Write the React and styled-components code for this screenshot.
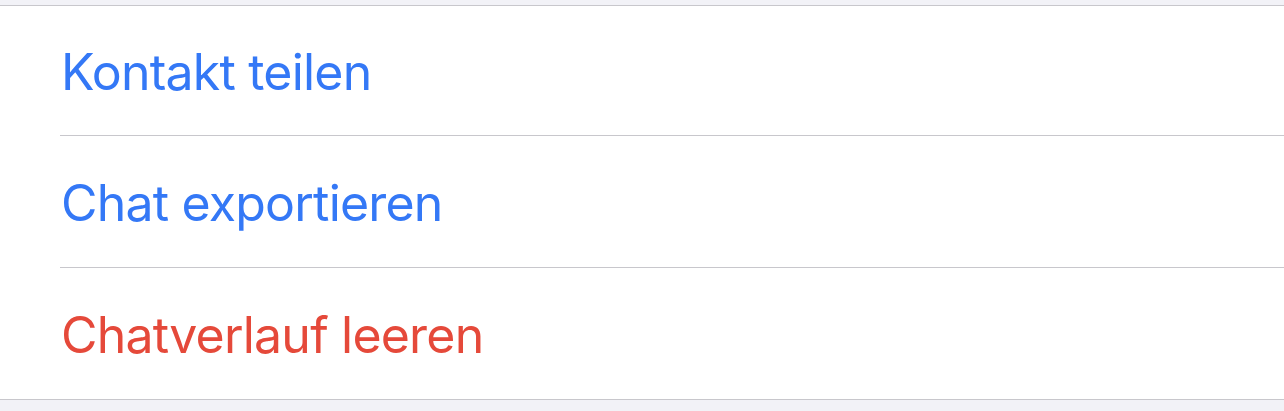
import * as React from 'react'
import styled, { createGlobalStyle } from 'styled-components'

const GlobalStyle = createGlobalStyle`
  html, body {
    margin: 0;
    padding: 0;
    background: #f2f2f7;
  }
  body {
    font-family: Inter, "Noto Sans", sans-serif;
    -webkit-font-smoothing: antialiased;
  }
`

const Page = styled.div`
  width: 1284px;
  height: 411px;
  overflow: hidden;
  padding-top: 5px;
  box-sizing: border-box;
  background: #f2f2f7;
`

const Group = styled.ul`
  list-style: none;
  margin: 0;
  padding: 0;
  background: #ffffff;
  border-top: 1px solid #c8c7cc;
  border-bottom: 1px solid #c8c7cc;
`

const Row = styled.li`
  display: flex;
  align-items: center;
  height: ${p => p.$height}px;
  padding-left: 60px;
  box-sizing: border-box;
`

const RowInner = styled.div`
  flex: 1;
  height: 100%;
  display: flex;
  align-items: center;
  border-bottom: ${p => (p.$last ? 'none' : '1px solid #c8c7cc')};
  box-sizing: border-box;
`

const Label = styled.span`
  font-size: 50px;
  font-weight: 400;
  letter-spacing: -0.8px;
  padding-left: 1px;
  padding-top: 2px;
  color: ${p => (p.$destructive ? '#e5493a' : '#3478f6')};
`

const actions = [
  { label: 'Kontakt teilen', height: 130 },
  { label: 'Chat exportieren', height: 132 },
  { label: 'Chatverlauf leeren', height: 131, destructive: true }
]

export default function App () {
  return (
    <Page>
      <GlobalStyle />
      <Group>
        {actions.map((a, i) => (
          <Row key={a.label} $height={a.height}>
            <RowInner $last={i === actions.length - 1}>
              <Label $destructive={a.destructive}>{a.label}</Label>
            </RowInner>
          </Row>
        ))}
      </Group>
    </Page>
  )
}
